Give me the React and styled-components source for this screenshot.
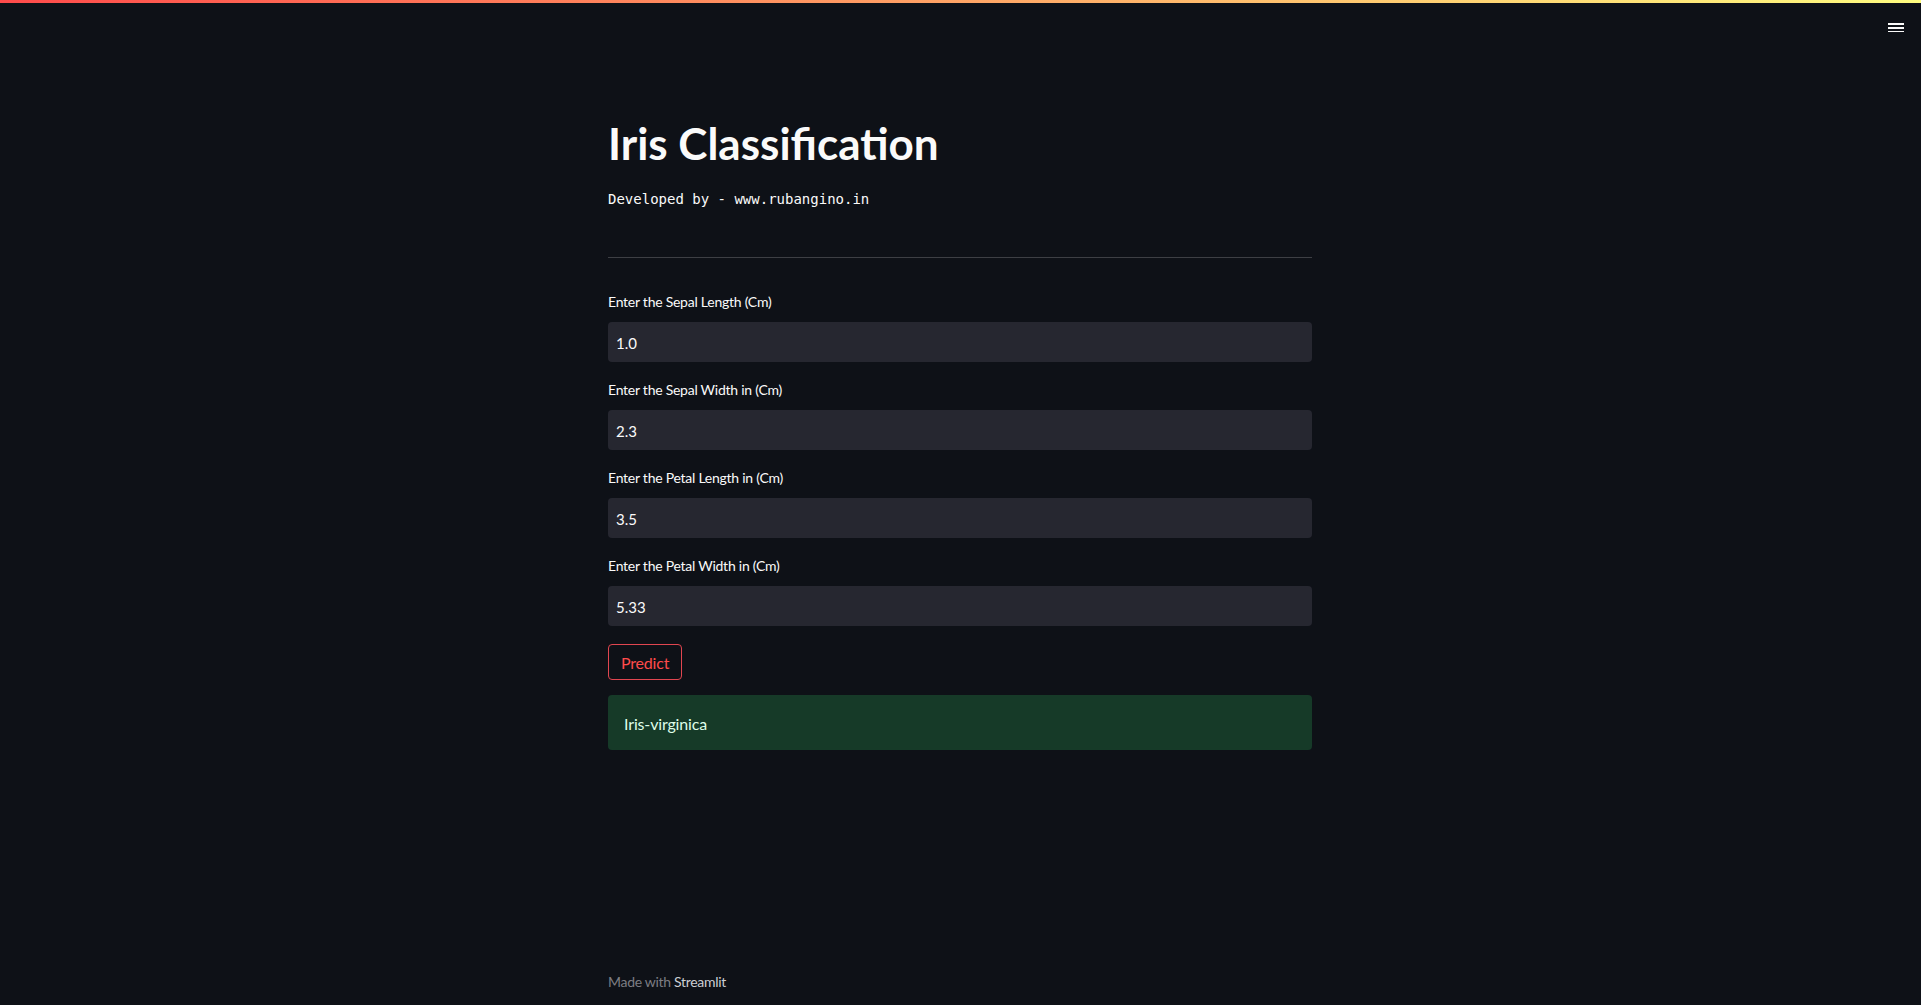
import React from "react";
import styled, { createGlobalStyle } from "styled-components";

const GlobalStyle = createGlobalStyle`
  * { box-sizing: border-box; }
  html, body { margin: 0; padding: 0; background: #0e1117; }
  body { font-family: "Lato", "Noto Sans", sans-serif; color: #fafafa; overflow: hidden; }
`;

const Page = styled.div`
  min-height: 100vh;
  display: flex;
  flex-direction: column;
  background: #0e1117;
`;

const Decoration = styled.div`
  height: 3px;
  background: linear-gradient(90deg, rgb(255, 75, 75), rgb(255, 253, 128));
`;

const Header = styled.header`
  height: 48px;
  display: flex;
  justify-content: flex-end;
  align-items: flex-start;
  padding: 17px 17px 0 0;
`;

const MenuButton = styled.button`
  background: none;
  border: none;
  padding: 0;
  display: flex;
  cursor: pointer;
  color: #fafafa;
`;

const Main = styled.main`
  width: 704px;
  margin: 0 0 0 608px;
  padding-top: 66px;
  display: flex;
  flex-direction: column;
`;

const Title = styled.h1`
  margin: 0;
  font-family: "Lato", sans-serif;
  font-weight: 700;
  font-size: 44px;
  line-height: 1.2;
  color: #fafafa;
`;

const Subtitle = styled.div`
  margin-top: 19.8px;
  font-family: "DejaVu Sans Mono", "Liberation Mono", monospace;
  font-size: 14px;
  line-height: 19.6px;
  color: #fafafa;
  white-space: pre;
`;

const Divider = styled.hr`
  margin: 48px 0 0;
  border: none;
  height: 1px;
  background: rgba(250, 250, 250, 0.2);
`;

const Fields = styled.div`
  margin-top: 32.5px;
  display: flex;
  flex-direction: column;
  gap: 16.5px;
`;

const Field = styled.label`
  display: flex;
  flex-direction: column;
`;

const LabelText = styled.span`
  font-size: 14px;
  line-height: 22px;
  margin-bottom: 9.5px;
  letter-spacing: -0.25px;
  color: #fafafa;
`;

const NumberInput = styled.input`
  height: 40px;
  width: 100%;
  border: none;
  outline: none;
  border-radius: 4px;
  background: rgb(38, 39, 48);
  color: #fafafa;
  font-family: "Lato", sans-serif;
  font-size: 15px;
  padding: 1px 8px 0;
`;

const Actions = styled.div`
  margin-top: 18px;
  display: flex;
`;

const PredictButton = styled.button`
  font-family: "Lato", sans-serif;
  font-size: 16px;
  line-height: 1.6;
  padding: 4.5px 12px 3.5px;
  letter-spacing: -0.2px;
  border-radius: 4px;
  border: 1px solid rgb(225, 70, 80);
  background: transparent;
  color: rgb(255, 75, 75);
  cursor: pointer;
`;

const Alert = styled.div`
  margin-top: 15.5px;
  border-radius: 4px;
  background: rgb(22, 58, 40);
  color: rgb(223, 253, 233);
  font-size: 16px;
  line-height: 25.6px;
  letter-spacing: -0.15px;
  padding: 15.5px 16px 14px;
`;

const Footer = styled.footer`
  width: 704px;
  margin: auto 0 0 608px;
  padding-bottom: 12px;
  font-size: 14px;
  line-height: 22.4px;
  letter-spacing: -0.3px;
  color: rgb(125, 126, 132);
`;

const FooterLink = styled.a`
  color: rgb(205, 206, 211);
  text-decoration: none;
`;

const MenuIcon = () => (
  <svg width="16" height="12" viewBox="0 0 16 12" fill="currentColor">
    <rect x="0" y="3" width="16" height="2" />
    <rect x="0" y="7" width="16" height="2" />
    <rect x="0" y="11" width="16" height="1.6" />
  </svg>
);

const fields = [
  { label: "Enter the Sepal Length (Cm)", value: "1.0" },
  { label: "Enter the Sepal Width in (Cm)", value: "2.3" },
  { label: "Enter the Petal Length in (Cm)", value: "3.5" },
  { label: "Enter the Petal Width in (Cm)", value: "5.33" },
];

export default function App() {
  return (
    <>
      <GlobalStyle />
      <Page>
        <Decoration />
        <Header>
          <MenuButton aria-label="Menu">
            <MenuIcon />
          </MenuButton>
        </Header>
        <Main>
          <Title>Iris Classification</Title>
          <Subtitle>Developed by - www.rubangino.in</Subtitle>
          <Divider />
          <Fields>
            {fields.map((f) => (
              <Field key={f.label}>
                <LabelText>{f.label}</LabelText>
                <NumberInput type="text" defaultValue={f.value} />
              </Field>
            ))}
          </Fields>
          <Actions>
            <PredictButton>Predict</PredictButton>
          </Actions>
          <Alert>Iris-virginica</Alert>
        </Main>
        <Footer>
          Made with <FooterLink href="#">Streamlit</FooterLink>
        </Footer>
      </Page>
    </>
  );
}
